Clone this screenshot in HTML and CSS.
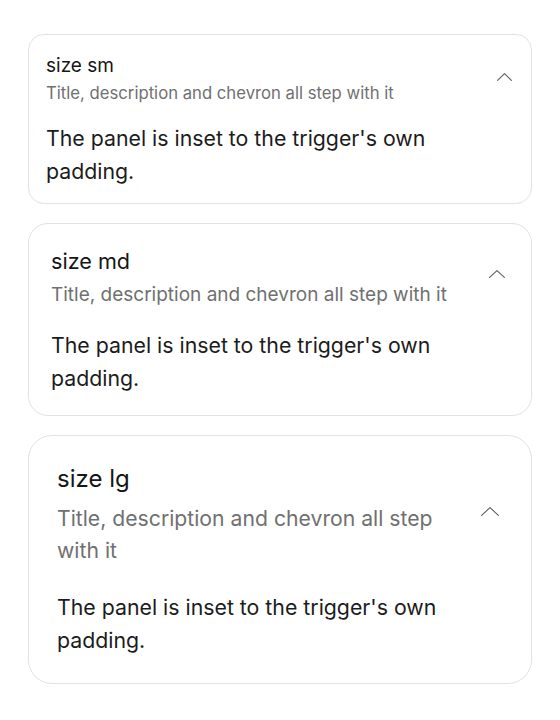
FILE: index.html
```html
<!DOCTYPE html>
<html lang="en">
<head>
<meta charset="utf-8">
<title>Accordion sizes</title>
<link rel="stylesheet" href="styles.css">
</head>
<body>
<main class="stack">
  <section class="acc acc-sm">
    <div class="acc-trigger">
      <div class="acc-text">
        <div class="acc-title">size sm</div>
        <div class="acc-desc">Title, description and chevron all step with it</div>
      </div>
      <svg class="acc-chevron" width="15" height="8" viewBox="0 0 15 8" aria-hidden="true">
        <polyline points="0.6,7.4 7.5,0.6 14.4,7.4" />
      </svg>
    </div>
    <div class="acc-panel">The panel is inset to the trigger's own padding.</div>
  </section>

  <section class="acc acc-md">
    <div class="acc-trigger">
      <div class="acc-text">
        <div class="acc-title">size md</div>
        <div class="acc-desc">Title, description and chevron all step with it</div>
      </div>
      <svg class="acc-chevron" width="16" height="8" viewBox="0 0 16 8" aria-hidden="true">
        <polyline points="0.6,7.4 8,0.6 15.4,7.4" />
      </svg>
    </div>
    <div class="acc-panel">The panel is inset to the trigger's own padding.</div>
  </section>

  <section class="acc acc-lg">
    <div class="acc-trigger">
      <div class="acc-text">
        <div class="acc-title">size lg</div>
        <div class="acc-desc">Title, description and chevron all step with it</div>
      </div>
      <svg class="acc-chevron" width="18" height="9" viewBox="0 0 18 9" aria-hidden="true">
        <polyline points="0.6,8.4 9,0.6 17.4,8.4" />
      </svg>
    </div>
    <div class="acc-panel">The panel is inset to the trigger's own padding.</div>
  </section>
</main>
</body>
</html>
```

FILE: styles.css
```css
* {
  box-sizing: border-box;
}

html,
body {
  margin: 0;
  background: #ffffff;
}

body {
  font-family: Inter, "Noto Sans", "Liberation Sans", sans-serif;
  color: #1a1a1a;
}

.stack {
  display: flex;
  flex-direction: column;
  gap: 19px;
  padding: 34px 28px;
}

/* Accordion card */
.acc {
  border: 1px solid #e2e2e2;
  border-radius: var(--radius);
  background: #ffffff;
  padding: var(--pad-top) var(--pad-x) var(--pad-bottom);
  display: flex;
  flex-direction: column;
  gap: var(--section-gap);
}

.acc-trigger {
  display: flex;
  align-items: center;
  gap: 16px;
}

.acc-text {
  flex: 1;
  min-width: 0;
  display: flex;
  flex-direction: column;
  gap: var(--title-gap);
}

.acc-title {
  font-size: var(--title-size);
  line-height: 1.4;
  font-weight: 400;
  color: #161616;
}

.acc-desc {
  font-size: var(--desc-size);
  line-height: 1.55;
  color: #707070;
}

/* Chevron sits a little above the header's midline */
.acc-chevron {
  flex: none;
  margin-right: var(--chev-inset);
  margin-bottom: var(--chev-lift);
}

.acc-chevron polyline {
  fill: none;
  stroke: #5e5e5e;
  stroke-width: 1.1;
  stroke-linecap: round;
  stroke-linejoin: round;
}

/* Panel text keeps clear of the chevron column */
.acc-panel {
  font-size: 21.3px;
  line-height: 33px;
  color: #1c1c1c;
  padding-right: 36px;
}

/* Size steps */
.acc-sm {
  --radius: 16px;
  --pad-top: 18px;
  --pad-bottom: 14.5px;
  --pad-x: 17px;
  --section-gap: 16px;
  --title-gap: 1px;
  --title-size: 19px;
  --desc-size: 16.7px;
  --chev-inset: 2px;
  --chev-lift: 6px;
}

.acc-md {
  --radius: 20px;
  --pad-top: 22px;
  --pad-bottom: 20.3px;
  --pad-x: 22px;
  --section-gap: 19.5px;
  --title-gap: 3.5px;
  --title-size: 21.6px;
  --desc-size: 19px;
  --chev-inset: 4px;
  --chev-lift: 7px;
}

.acc-lg {
  --radius: 24px;
  --pad-top: 26px;
  --pad-bottom: 25.7px;
  --pad-x: 28px;
  --section-gap: 24px;
  --title-gap: 6px;
  --title-size: 24px;
  --desc-size: 21.2px;
  --chev-inset: 4px;
  --chev-lift: 7px;
}
```
